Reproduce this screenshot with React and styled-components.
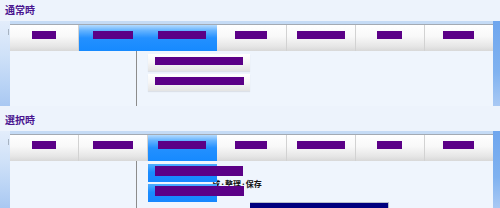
import styled, { createGlobalStyle } from "styled-components";

const GlobalStyle = createGlobalStyle`
  html, body {
    margin: 0;
    padding: 0;
    background: #edf3fc;
    width: 500px;
    height: 208px;
    overflow: hidden;
    font-family: "Noto Sans CJK JP", "Noto Sans", sans-serif;
  }
`;

const Section = styled.section`
  display: flex;
  flex-direction: column;
  height: ${({ h }) => h}px;
`;

const Title = styled.h2`
  margin: 0;
  height: 21px;
  padding-left: 5px;
  font-size: 10px;
  line-height: 19px;
  font-weight: 700;
  color: #4a148f;
`;

const Frame = styled.div`
  display: flex;
  height: ${({ h }) => h}px;
`;

const LeftStrip = styled.div`
  width: 10px;
  flex-shrink: 0;
  position: relative;
  background: linear-gradient(#e3edfb 0%, #cfe1f8 40%, #b9d3f5 75%, #a9c8f2 100%);

  &::after {
    content: "";
    position: absolute;
    left: 8px;
    top: 8px;
    width: 1px;
    height: 6px;
    background: #a7b3c2;
  }
`;

const RightStrip = styled.div`
  width: 7px;
  flex-shrink: 0;
  background: linear-gradient(#6fa6ee 0%, #80b2f0 60%, #a9c9f4 100%);
`;

const Main = styled.div`
  flex: 1;
  display: flex;
  flex-direction: column;
  min-width: 0;
`;

const Band = styled.div`
  height: 3px;
  background: #c5dbf5;
`;

const MenuBar = styled.div`
  display: flex;
  height: 26px;
  border-top: 1px solid #a3aab3;
`;

const MenuItem = styled.div`
  position: relative;
  flex: 1;
  display: flex;
  justify-content: center;
  padding-top: 6px;
  box-sizing: border-box;
  border-right: 1px solid ${({ active }) => (active ? "transparent" : "#d2d2d2")};
  background: ${({ active }) =>
    active
      ? "linear-gradient(#b4dbff 0%, #62b2ff 22%, #2390ff 50%, #168aff 100%)"
      : "linear-gradient(#ffffff 0%, #f8f8f8 45%, #e6e6e6 82%, #d8d8d8 100%)"};

  &:last-child {
    border-right: none;
  }
`;

const Redact = styled.span`
  display: block;
  width: ${({ w }) => w}px;
  height: ${({ h }) => h || 8}px;
  background: #5b0087;
`;

const Body = styled.div`
  flex: 1;
  display: flex;
  position: relative;
  background: #eff5fd;
`;

const SidePane = styled.div`
  width: 126px;
  border-right: 1px solid #8c8c8c;
`;

const Dropdown = styled.div`
  position: absolute;
  top: calc(100% + 3px);
  left: 0;
  width: 102px;
  display: flex;
  flex-direction: column;
  gap: ${({ selected }) => (selected ? 2 : 3)}px;
  z-index: 2;
`;

const DropItem = styled.div`
  position: relative;
  z-index: 2;
  height: ${({ selected }) => (selected ? 18 : 17)}px;
  padding: ${({ selected }) => (selected ? "2px" : "3px")} 0 0 7px;
  box-sizing: border-box;
  background: ${({ selected }) =>
    selected
      ? "linear-gradient(#4eaeff, #1a8cff 45%, #1687ff) 0 0 / 69px 100% no-repeat"
      : "linear-gradient(#ffffff 0%, #f6f6f6 50%, #e4e4e4 100%)"};
  box-shadow: ${({ selected }) => (selected ? "none" : "0 1px 1px rgba(0,0,0,0.08)")};
`;

const Tip = styled.div`
  position: absolute;
  z-index: 1;
  left: 64px;
  top: 15px;
  font-size: 8px;
  line-height: 10px;
  font-weight: 700;
  color: #111;
  white-space: nowrap;
`;

const Window = styled.div`
  position: absolute;
  left: 240px;
  bottom: 0;
  width: 138px;
  height: 5px;
  background: #00007f;
  border-top: 1px solid #b8bfcc;
  border-right: 1px solid #b8bfcc;
`;

const bars = [24, 40, 48, 32, 48, 25, 31];

function Panel({ title, selected, h, frameH }) {
  return (
    <Section h={h}>
      <Title>{title}</Title>
      <Frame h={frameH}>
        <LeftStrip />
        <Main>
          <Band />
          <MenuBar>
            {bars.map((w, i) => (
              <MenuItem key={i} active={i === 2 || (!selected && i === 1)}>
                <Redact w={w} />
                {i === 2 && (
                  <Dropdown selected={selected}>
                    {selected && <Tip>成·整理·保存</Tip>}
                    <DropItem selected={selected}>
                      <Redact w={88} h={selected ? 10 : 8} />
                    </DropItem>
                    <DropItem selected={selected}>
                      <Redact w={89} h={selected ? 10 : 8} />
                    </DropItem>
                  </Dropdown>
                )}
              </MenuItem>
            ))}
          </MenuBar>
          <Body>
            <SidePane />
            {selected && <Window />}
          </Body>
        </Main>
        <RightStrip />
      </Frame>
    </Section>
  );
}

export default function App() {
  return (
    <>
      <GlobalStyle />
      <Panel title="通常時" h={110} frameH={85} />
      <Panel title="選択時" selected h={98} frameH={77} />
    </>
  );
}
